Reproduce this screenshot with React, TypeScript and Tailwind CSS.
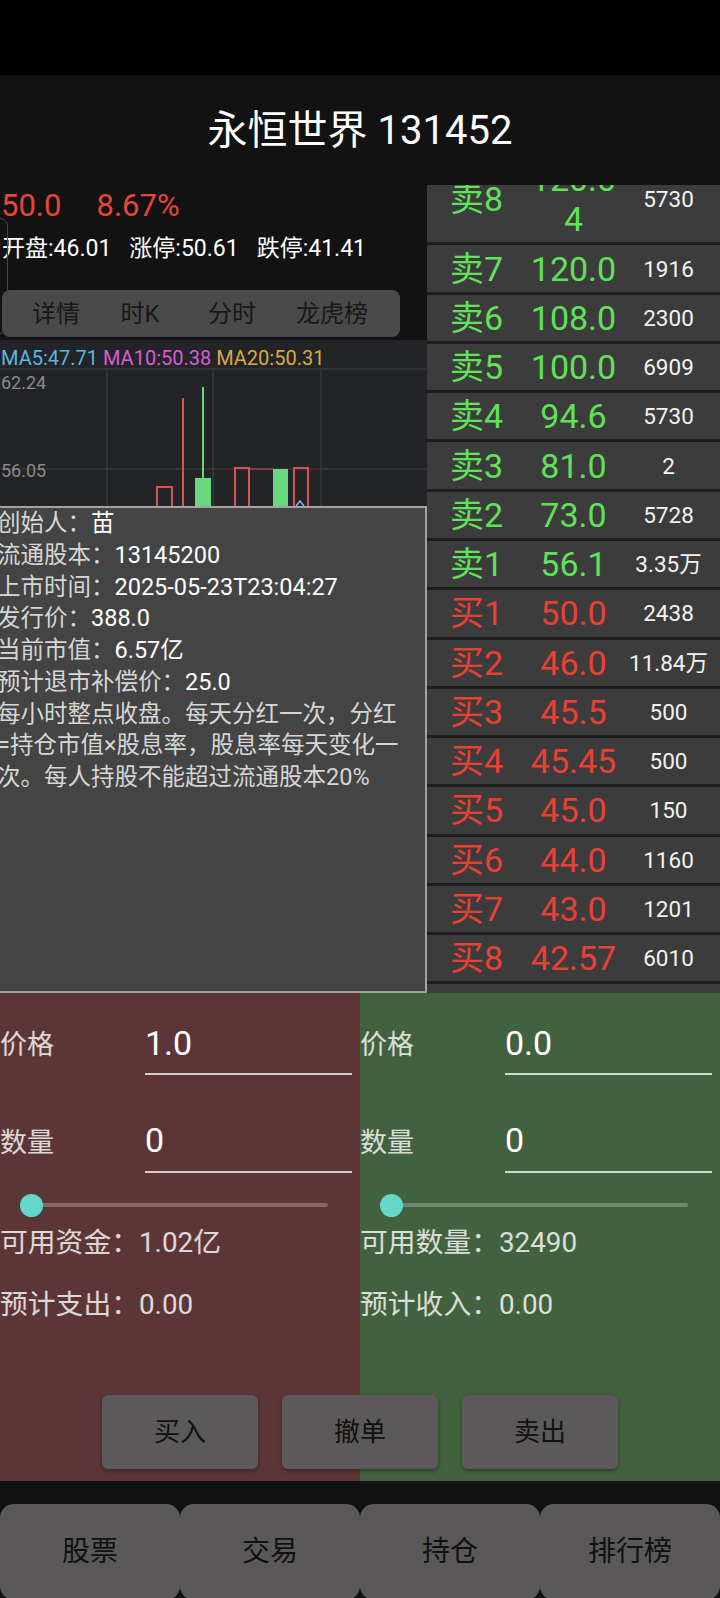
import React from "react";

type Level = { label: string; price: string; qty: string; sell: boolean; tall?: boolean };

const book: Level[] = [
  { label: "卖8", price: "120.0\n4", qty: "5730", sell: true, tall: true },
  { label: "卖7", price: "120.0", qty: "1916", sell: true },
  { label: "卖6", price: "108.0", qty: "2300", sell: true },
  { label: "卖5", price: "100.0", qty: "6909", sell: true },
  { label: "卖4", price: "94.6", qty: "5730", sell: true },
  { label: "卖3", price: "81.0", qty: "2", sell: true },
  { label: "卖2", price: "73.0", qty: "5728", sell: true },
  { label: "卖1", price: "56.1", qty: "3.35万", sell: true },
  { label: "买1", price: "50.0", qty: "2438", sell: false },
  { label: "买2", price: "46.0", qty: "11.84万", sell: false },
  { label: "买3", price: "45.5", qty: "500", sell: false },
  { label: "买4", price: "45.45", qty: "500", sell: false },
  { label: "买5", price: "45.0", qty: "150", sell: false },
  { label: "买6", price: "44.0", qty: "1160", sell: false },
  { label: "买7", price: "43.0", qty: "1201", sell: false },
  { label: "买8", price: "42.57", qty: "6010", sell: false },
  { label: "买9", price: "42.0", qty: "300", sell: false },
];

const info: [string, string][] = [
  ["创始人：", "苗"],
  ["流通股本：", "13145200"],
  ["上市时间：", "2025-05-23T23:04:27"],
  ["发行价：", "388.0"],
  ["当前市值：", "6.57亿"],
  ["预计退市补偿价：", "25.0"],
];

function BookRow({ row }: { row: Level }) {
  const color = row.sell ? "text-[#5fe257]" : "text-[#ea4034]";
  return (
    <div
      className={`grid grid-cols-[23px_80px_87px_103px] items-center bg-[#3c3c3c] border-b-[3px] border-[#1e1e1e] ${
        row.tall ? "h-[89.4px]" : "h-[49.27px]"
      }`}
    >
      <span />
      <span className={`text-[34px] leading-[40px] ${color}`}>{row.label}</span>
      <span className={`text-[34px] leading-[40px] text-center whitespace-pre-line ${color}`}>{row.price}</span>
      <span className="text-[22.5px] leading-[30px] text-center text-[#f2f2f2]">{row.qty}</span>
    </div>
  );
}

function Chart() {
  const grid = "#37383b";
  const red = "#d9524f";
  const green = "#6ad680";
  return (
    <div className="relative mt-[3px] h-[166px] bg-[#232427] overflow-hidden">
      <svg className="absolute inset-0" width="427" height="166" viewBox="0 0 427 166">
        <line x1="0" y1="29" x2="427" y2="29" stroke={grid} strokeWidth="1.5" />
        <line x1="0" y1="129" x2="427" y2="129" stroke={grid} strokeWidth="1.5" />
        {[107, 213, 321].map((x) => (
          <line key={x} x1={x} y1="29" x2={x} y2="166" stroke={grid} strokeWidth="1.5" />
        ))}
        <text x="1" y="49" fill="#8a8a8a" fontSize="18" fontFamily="Roboto, sans-serif">62.24</text>
        <text x="1" y="137" fill="#8a8a8a" fontSize="18" fontFamily="Roboto, sans-serif">56.05</text>
        <rect x="157" y="147" width="15" height="30" fill="none" stroke={red} strokeWidth="2" />
        <line x1="183" y1="58" x2="183" y2="166" stroke={red} strokeWidth="2" />
        <line x1="203" y1="47" x2="203" y2="138" stroke={green} strokeWidth="2" />
        <rect x="195" y="138" width="16" height="30" fill={green} />
        <rect x="235" y="128" width="14" height="40" fill="none" stroke={red} strokeWidth="2" />
        <line x1="250" y1="129" x2="273" y2="129" stroke="#b65855" strokeWidth="1" />
        <rect x="273" y="129" width="15" height="40" fill={green} />
        <rect x="294" y="128" width="14" height="40" fill="none" stroke={red} strokeWidth="2" />
        <polyline points="296,166 300,161 304,166" fill="none" stroke="#8fb4e0" strokeWidth="1.5" />
      </svg>
      <div className="relative pt-[4px] pl-[1px] text-[20px] leading-[28px] whitespace-pre">
        <span className="text-[#5bb7de]">MA5:47.71 </span>
        <span className="text-[#d65fd3]">MA10:50.38 </span>
        <span className="text-[#d8aa42]">MA20:50.31</span>
      </div>
    </div>
  );
}

function TradeSide({
  price,
  availLabel,
  avail,
  estLabel,
}: {
  price: string;
  availLabel: string;
  avail: string;
  estLabel: string;
}) {
  return (
    <div className="w-[360px]">
      <div className="flex items-start pt-[30px]">
        <div className="w-[145px] mt-[2px] text-[27px] leading-[40px] text-white/80">价格</div>
        <div className="w-[207px] border-b-2 border-white/75 pb-[10px] text-[34px] leading-[40px] text-white">{price}</div>
      </div>
      <div className="flex items-start mt-[45px]">
        <div className="w-[145px] mt-[3px] text-[27px] leading-[40px] text-white/80">数量</div>
        <div className="w-[207px] border-b-2 border-white/75 pb-[11px] text-[34px] leading-[40px] text-white">0</div>
      </div>
      <div className="relative mt-[20px] h-[24px] pl-[31px] flex items-center">
        <div className="w-[297px] h-[4px] rounded-full bg-white/25" />
        <div className="absolute left-[19.5px] top-[0.5px] w-[23px] h-[23px] rounded-full bg-[#63d7ca]" />
      </div>
      <div className="mt-[8px] text-[27.8px] leading-[36px] text-white/80">
        {availLabel}
        {avail}
      </div>
      <div className="mt-[26px] text-[27.8px] leading-[36px] text-white/80">{estLabel}0.00</div>
    </div>
  );
}

export default function App() {
  return (
    <div className="w-[720px] h-[1598px] overflow-hidden bg-[#121212] text-white font-['Roboto','Noto_Sans_CJK_SC',sans-serif]">
      <div className="h-[75px] bg-black" />
      <header className="h-[107px] pt-[31px] text-center text-[40px] leading-[50px]">永恒世界 131452</header>

      <div className="flex h-[811px]">
        {/* left: quote, tabs, chart and the detail popup */}
        <div className="relative w-[427px]">
          <div className="absolute left-[-30px] top-[36px] w-[38px] h-[116px] rounded-[8px] border-[1.5px] border-[#3b4a51]" />
          <div className="pt-[6px] h-[42px] flex text-[31px] leading-[36px] text-[#e8453a]">
            <span className="pl-[1px]">50.0</span>
            <span className="ml-[35px]">8.67%</span>
          </div>
          <div className="mt-[9px] h-[32px] flex gap-[18px] pl-[2px] text-[23px] leading-[32px] text-white">
            <span>开盘:46.01</span>
            <span>涨停:50.61</span>
            <span>跌停:41.41</span>
          </div>
          <div className="mt-[25px] ml-[2px] w-[398px] h-[47px] rounded-[8px] bg-[#4a4a4a] flex items-center pl-[8px] text-[24px] text-[#181818]">
            <span className="w-[92px] text-center">详情</span>
            <span className="w-[76px] text-center">时K</span>
            <span className="w-[108px] text-center">分时</span>
            <span className="w-[92px] text-center">龙虎榜</span>
          </div>
          <Chart />
          <div className="-ml-[5px] w-[432px] h-[487px] border-2 border-[#a3a3a3] bg-[#444444] text-[23.5px] leading-[31.75px] text-[#d6d6d6]">
            {info.map(([k, v]) => (
              <div key={k}>
                {k}
                <span className="text-white">{v}</span>
              </div>
            ))}
            <div>
              每小时整点收盘。每天分红一次，分红
              <br />
              =持仓市值×股息率，股息率每天变化一
              <br />
              次。每人持股不能超过流通股本20%
            </div>
          </div>
        </div>

        {/* right: order book, scrolled a little */}
        <div className="mt-[3px] w-[293px] h-[808px] overflow-hidden">
          <div className="-mt-[29px]">
            {book.map((r) => (
              <BookRow key={r.label} row={r} />
            ))}
          </div>
        </div>
      </div>

      <div className="h-[488px] bg-[linear-gradient(to_right,#5c3637_50%,#42613e_50%)]">
        <div className="flex">
          <TradeSide price="1.0" availLabel="可用资金：" avail="1.02亿" estLabel="预计支出：" />
          <TradeSide price="0.0" availLabel="可用数量：" avail="32490" estLabel="预计收入：" />
        </div>
        <div className="mt-[72px] flex justify-center gap-[24px]">
          {["买入", "撤单", "卖出"].map((t) => (
            <button
              key={t}
              type="button"
              className="w-[156px] h-[74px] rounded-[6px] bg-[#5b5959] shadow-[0_2px_4px_rgba(0,0,0,0.35)] text-[26px] text-[#111]"
            >
              {t}
            </button>
          ))}
        </div>
      </div>

      <nav className="pt-[23px] flex">
        {["股票", "交易", "持仓", "排行榜"].map((t) => (
          <div key={t} className="w-[180px] h-[96px] rounded-[14px] bg-[#5a5858] flex items-center justify-center text-[28px] text-[#111]">
            {t}
          </div>
        ))}
      </nav>
    </div>
  );
}
